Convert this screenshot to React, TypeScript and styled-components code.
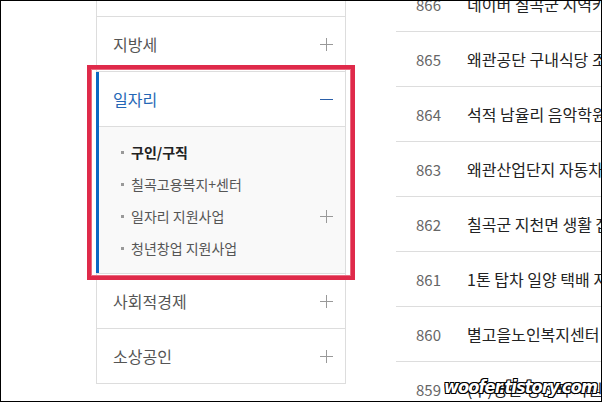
import styled, { createGlobalStyle } from "styled-components";

const GlobalStyle = createGlobalStyle`
  html, body {
    margin: 0;
    padding: 0;
    background: #fff;
  }
  body {
    font-family: "Noto Sans CJK KR", "Noto Sans", sans-serif;
  }
`;

const Frame = styled.div`
  position: relative;
  box-sizing: border-box;
  width: 602px;
  height: 402px;
  border: 1px solid #000;
  overflow: hidden;
  display: flex;
  align-items: flex-start;
  padding-left: 95px;
  gap: 50px;
`;

const Sidebar = styled.nav`
  flex: 0 0 250px;
  box-sizing: border-box;
  margin-top: -40px;
  border: 1px solid #ddd;
  border-top: 0;
`;

const Row = styled.div<{ $active?: boolean }>`
  display: flex;
  align-items: center;
  justify-content: space-between;
  height: 54px;
  border-top: 1px solid #ddd;
  padding: 0 12px 0 16px;
  font-size: 16px;
  color: ${(p) => (p.$active ? "#2466b5" : "#555")};
`;

const Group = styled.div`
  position: relative;

  &::before {
    content: "";
    position: absolute;
    left: -1px;
    top: 1px;
    bottom: 0;
    width: 3px;
    background: #0b67c2;
  }
`;

const SubMenu = styled.ul`
  margin: 0;
  list-style: none;
  border-top: 1px solid #ddd;
  background: #f9f9f9;
  padding: 9px 12px 9px 24px;
`;

const SubItem = styled.li<{ $current?: boolean }>`
  display: flex;
  align-items: center;
  height: 32px;
  font-size: 14px;
  color: ${(p) => (p.$current ? "#222" : "#555")};
  font-weight: ${(p) => (p.$current ? 700 : 400)};

  &::before {
    content: "";
    width: 3px;
    height: 3px;
    background: #999;
    margin-right: 7px;
  }
`;

const SubLabel = styled.span`
  flex: 1;
`;

const List = styled.ul`
  flex: 1;
  margin: -24px 0 0;
  padding: 0;
  list-style: none;
  min-width: 0;
`;

const ListRow = styled.li`
  display: grid;
  grid-template-columns: 71px 1fr;
  align-items: center;
  height: 54px;
  border-bottom: 1px solid #ddd;
  white-space: nowrap;
`;

const Num = styled.span`
  padding-left: 20px;
  font-size: 15px;
  color: #666;
`;

const Subject = styled.span`
  overflow: hidden;
  font-size: 16px;
  color: #222;
`;

const Highlight = styled.div`
  position: absolute;
  left: 86px;
  top: 64px;
  width: 268px;
  height: 215px;
  box-sizing: border-box;
  border: 4px solid #df2a4a;
  box-shadow: inset 0 0 0 1px #ea6a80;
  pointer-events: none;
`;

const Watermark = styled.div`
  position: absolute;
  right: 4px;
  bottom: 4px;
  font-family: "DejaVu Sans Condensed", "DejaVu Sans", sans-serif;
  font-style: italic;
  font-weight: 700;
  font-size: 18px;
  letter-spacing: -0.9px;
  color: #fff;
  -webkit-text-stroke: 1px #000;
  paint-order: stroke fill;
  text-shadow: 1px 1px 0 #000, -1px -1px 0 #000, 1px -1px 0 #000, -1px 1px 0 #000;
`;

const Sign = ({ minus = false, color = "#999" }: { minus?: boolean; color?: string }) => (
  <svg width="13" height="13" viewBox="0 0 13 13">
    <path d="M0 6.5h13" stroke={color} strokeWidth="1" />
    {!minus && <path d="M6.5 0v13" stroke={color} strokeWidth="1" />}
  </svg>
);

const posts = [
  { no: 866, title: "네이버 칠곡군 지역카페 운영자 모집" },
  { no: 865, title: "왜관공단 구내식당 조리원 모집" },
  { no: 864, title: "석적 남율리 음악학원 강사 모집" },
  { no: 863, title: "왜관산업단지 자동차 부품 생산직 모집" },
  { no: 862, title: "칠곡군 지천면 생활 잡화 물류센터" },
  { no: 861, title: "1톤 탑차 일양 택배 지입 기사 모집" },
  { no: 860, title: "별고을노인복지센터 요양보호사 모집" },
  { no: 859, title: "(주)영진 생산직 사원 모집" },
];

export default function App() {
  return (
    <>
      <GlobalStyle />
      <Frame>
        <Sidebar>
          <Row>
            <span>부동산</span>
            <Sign />
          </Row>
          <Row>
            <span>지방세</span>
            <Sign />
          </Row>
          <Group>
            <Row $active>
              <span>일자리</span>
              <Sign minus color="#2a5ea8" />
            </Row>
            <SubMenu>
              <SubItem $current>
                <SubLabel>구인/구직</SubLabel>
              </SubItem>
              <SubItem>
                <SubLabel>칠곡고용복지+센터</SubLabel>
              </SubItem>
              <SubItem>
                <SubLabel>일자리 지원사업</SubLabel>
                <Sign />
              </SubItem>
              <SubItem>
                <SubLabel>청년창업 지원사업</SubLabel>
              </SubItem>
            </SubMenu>
          </Group>
          <Row>
            <span>사회적경제</span>
            <Sign />
          </Row>
          <Row>
            <span>소상공인</span>
            <Sign />
          </Row>
        </Sidebar>
        <List>
          {posts.map((p) => (
            <ListRow key={p.no}>
              <Num>{p.no}</Num>
              <Subject>{p.title}</Subject>
            </ListRow>
          ))}
        </List>
        <Highlight />
        <Watermark>woofer.tistory.com</Watermark>
      </Frame>
    </>
  );
}
